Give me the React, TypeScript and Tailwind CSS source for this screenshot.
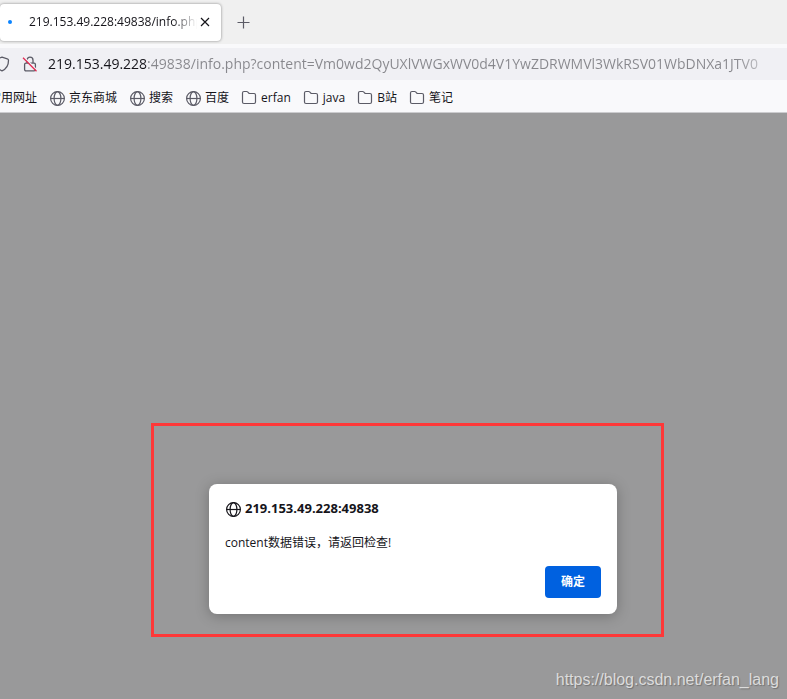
import React from 'react';

interface IconProps {
    className?: string;
}

const GlobeIcon: React.FC<IconProps> = ({ className = '' }) => (
    <svg viewBox="0 0 16 16" fill="none" stroke="currentColor" strokeWidth="1.2" aria-hidden="true" className={`w-4 h-4 shrink-0 ${className}`}>
        <circle cx="8.5" cy="8.5" r="6.9" />
        <ellipse cx="8.5" cy="8.5" rx="3.4" ry="6.9" />
        <path d="M1.700 8.500h13.600" />
    </svg>
);

const FolderIcon: React.FC<IconProps> = ({ className = '' }) => (
    <svg viewBox="0 0 16 16" fill="none" stroke="currentColor" strokeWidth="1.2" strokeLinejoin="round" aria-hidden="true" className={`w-4 h-4 shrink-0 ${className}`}>
        <path d="M1.500 3q0-1.500 1.500-1.500h2.600q.6 0 1 .4l1 1q.4.600 1 .600H13q1.500 0 1.500 1.500v7q0 1.500-1.500 1.500H3q-1.500 0-1.500-1.500z" />
    </svg>
);

const ShieldIcon: React.FC = () => (
    <svg viewBox="0 0 16 16" fill="none" stroke="#5b5b66" strokeWidth="1.3" strokeLinejoin="round" aria-hidden="true" className="w-4 h-4">
        <path d="M8 1.200l5.300 1.700q1.200.4 1.200 1.600c0 5.200-2.300 8.500-6.500 10.300C3.800 13 1.500 9.700 1.500 4.500q0-1.200 1.200-1.600z" />
    </svg>
);

const InsecureLockIcon: React.FC = () => (
    <svg viewBox="0 0 16 16" fill="none" strokeWidth="1.3" aria-hidden="true" className="w-4 h-4">
        <path d="M5 7V4.200a3 3 0 0 1 6 0V7" stroke="#5b5b66" />
        <rect x="2.600" y="7.200" width="10.800" height="7.600" rx="1.300" stroke="#5b5b66" />
        <path d="M1.800 1L15.300 14.500" stroke="#f0f0f4" strokeWidth="1.400" />
        <path d="M1 1.800L14.500 15.300" stroke="#e22850" />
    </svg>
);

const bookmarks = [
    { label: '京东商城', folder: false },
    { label: '搜索', folder: false },
    { label: '百度', folder: false },
    { label: 'erfan', folder: true },
    { label: 'java', folder: true },
    { label: 'B站', folder: true },
    { label: '笔记', folder: true },
];

const TabStrip: React.FC = () => (
    <div className="flex items-center h-11 bg-[#f0f0f0]">
        <div className="flex items-center w-[221px] h-[37px] px-2 rounded bg-white shadow-[0_0_3px_rgba(0,0,0,0.45)]">
            <span className="w-1 h-1 rounded-full shrink-0 bg-[#0a84ff]" />
            <span className="flex-1 min-w-0 ml-[17px] overflow-hidden whitespace-nowrap text-xs text-[#15141a] [mask-image:linear-gradient(to_left,transparent,black_24px)]">
                219.153.49.228:49838/info.php
            </span>
            <button type="button" aria-label="Close tab" className="flex items-center justify-center w-4 h-4 text-[#15141a]">
                <svg viewBox="0 0 16 16" fill="none" stroke="currentColor" strokeWidth="1.2" className="w-4 h-4">
                    <path d="M4 4l8 8M12 4l-8 8" />
                </svg>
            </button>
        </div>
        <button type="button" aria-label="New tab" className="flex items-center justify-center w-4 h-4 ml-[14px] text-[#5b5b66]">
            <svg viewBox="0 0 16 16" fill="none" stroke="currentColor" strokeWidth="1.2" className="w-4 h-4">
                <path d="M8.500 2.500v12M2.500 8.500h12" />
            </svg>
        </button>
    </div>
);

const AddressBar: React.FC = () => (
    <div className="flex items-center h-8 mt-1 bg-[#f0f0f4]">
        <button type="button" aria-label="Tracking protection" className="-ml-[6px]">
            <ShieldIcon />
        </button>
        <button type="button" aria-label="Connection not secure" className="ml-3">
            <InsecureLockIcon />
        </button>
        {/* the host part is dark, the rest of the address is dimmed */}
        <input
            type="text"
            aria-label="Address"
            defaultValue="219.153.49.228:49838/info.php?content=Vm0wd2QyUXlVWGxWV0d4V1YwZDRWMVl3WkRSV01WbDNXa1JTV0"
            className="flex-1 min-w-0 ml-[10px] mr-1 text-sm text-transparent outline-none bg-clip-text bg-[linear-gradient(to_right,#15141a_99px,#87878c_99px)] [mask-image:linear-gradient(to_left,transparent,black_48px)]"
        />
    </div>
);

const BookmarksBar: React.FC = () => (
    <nav className="flex items-center gap-3 h-[33px] pt-1 overflow-hidden whitespace-nowrap text-xs text-[#15141a] border-b border-[#cccccf]">
        <a href="#" className="-ml-[11px]">常用网址</a>
        {bookmarks.map(({ label, folder }) => (
            <a key={label} href="#" className="flex items-center gap-1">
                {folder ? <FolderIcon className="text-[#5b5b66]" /> : <GlobeIcon className="text-[#5b5b66]" />}
                {label}
            </a>
        ))}
    </nav>
);

const AlertDialog: React.FC = () => (
    <section
        role="alertdialog"
        aria-labelledby="alert-title"
        aria-describedby="alert-message"
        className="p-4 rounded-lg bg-white text-[#15141a] shadow-[0_2px_14px_rgba(0,0,0,0.25)]"
    >
        <h1 id="alert-title" className="flex items-center gap-1 h-[18px] text-[13px] font-bold">
            <GlobeIcon />
            219.153.49.228:49838
        </h1>
        <p id="alert-message" className="mt-[17px] text-xs">content数据错误，请返回检查!</p>
        <div className="flex justify-end mt-[15px]">
            <button type="button" className="h-8 px-4 rounded bg-[#0061e0] text-xs font-semibold text-white">确定</button>
        </div>
    </section>
);

const App: React.FC = () => {
    return (
        <div className="flex flex-col min-h-screen bg-[#99999a] font-['Open_Sans','Noto_Sans_CJK_SC',sans-serif]">
            <header className="bg-[#f9f9fb]">
                <TabStrip />
                <AddressBar />
                <BookmarksBar />
            </header>
            <main className="flex flex-col flex-1 items-center pt-[310px]">
                <div className="w-full max-w-[513px] ml-7 pt-[58px] pr-11 pb-5 pl-[55px] border-3 border-[#fd3838]">
                    <AlertDialog />
                </div>
                <p className="self-end mt-auto pr-2 pb-[7px] font-['Liberation_Sans',sans-serif] text-base text-[#dcdcdc] [text-shadow:1px_1px_1px_rgba(0,0,0,0.25)]">
                    https://blog.csdn.net/erfan_lang
                </p>
            </main>
        </div>
    );
};

export default App;
